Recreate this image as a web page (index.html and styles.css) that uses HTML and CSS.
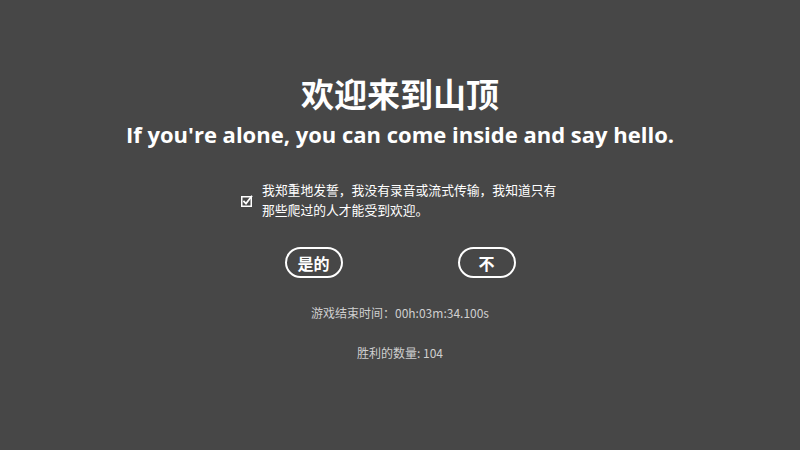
FILE: index.html
```html
<!DOCTYPE html>
<html lang="zh">
<head>
<meta charset="utf-8">
<link rel="stylesheet" href="styles.css">
</head>
<body>
<main class="screen">
  <h1 class="title">欢迎来到山顶</h1>
  <p class="subtitle">If you're alone, you can come inside and say hello.</p>
  <label class="oath">
    <span class="box">
      <svg width="12" height="12" viewBox="0 0 12 12"><rect x="0.75" y="1.75" width="9.5" height="9.5" fill="none" stroke="#fff" stroke-width="1.5"/><path d="M2.4 5.8 L5 8.6 L11 0.8" fill="none" stroke="#fff" stroke-width="1.8"/></svg>
    </span>
    <span class="oath-text">我郑重地发誓，我没有录音或流式传输，我知道只有那些爬过的人才能受到欢迎。</span>
  </label>
  <div class="choices">
    <button class="pill">是的</button>
    <button class="pill">不</button>
  </div>
  <p class="stat stat-time">游戏结束时间：00h:03m:34.100s</p>
  <p class="stat stat-wins">胜利的数量: 104</p>
</main>
</body>
</html>
```

FILE: styles.css
```css
html, body {
  margin: 0;
  padding: 0;
  background: #474747;
  width: 800px;
  height: 450px;
  overflow: hidden;
}
.screen {
  display: flex;
  flex-direction: column;
  align-items: center;
  padding-top: 73px;
  font-family: "Open Sans", "Noto Sans CJK SC", sans-serif;
  color: #fff;
}
.title {
  margin: 0;
  font-family: "Noto Sans CJK SC", sans-serif;
  font-size: 33px;
  font-weight: 700;
  line-height: 40px;
}
.subtitle {
  margin: 6px 0 0;
  font-size: 22px;
  font-weight: 700;
  line-height: 30px;
}
.oath {
  margin-top: 31px;
  display: flex;
  align-items: center;
  gap: 9px;
  width: 318px;
}
.box {
  display: flex;
  margin-top: 2px;
}
.oath-text {
  font-family: "Noto Sans CJK SC", sans-serif;
  font-size: 12.8px;
  line-height: 20px;
  width: 300px;
}
.choices {
  margin-top: 27px;
  display: flex;
  gap: 115px;
}
.pill {
  width: 58px;
  height: 31px;
  border: 2px solid #fff;
  border-radius: 16px;
  background: transparent;
  color: #fff;
  font-family: "Noto Sans CJK SC", sans-serif;
  font-weight: 700;
  font-size: 16px;
  padding: 0;
}
.stat {
  margin: 0;
  font-family: "Noto Sans CJK SC", sans-serif;
  font-size: 12px;
  color: #cfcfcf;
  line-height: 18px;
}
.stat-time { margin-top: 26px; }
.stat-wins { margin-top: 22px; }
```
